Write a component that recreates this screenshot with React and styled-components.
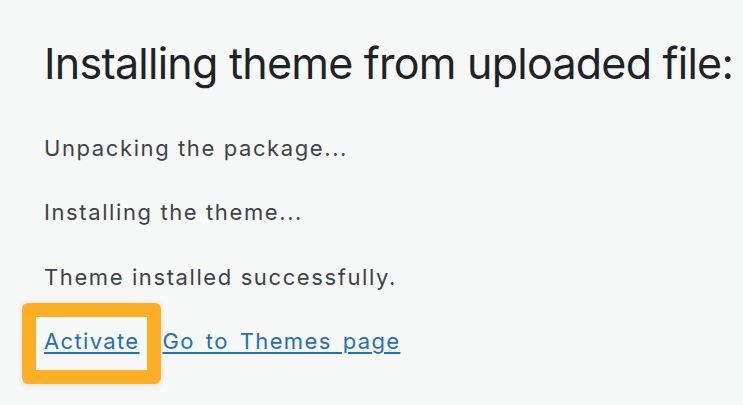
import * as React from 'react';
import styled, { createGlobalStyle } from 'styled-components';

const GlobalStyle = createGlobalStyle`
  html, body {
    margin: 0;
    padding: 0;
    background: #f6f7f7;
  }
  body {
    font-family: Inter, "Noto Sans", "Liberation Sans", sans-serif;
  }
`;

const Wrap = styled.div`
  box-sizing: border-box;
  width: 743px;
  height: 405px;
  overflow: hidden;
  padding: 37px 0 0 44px;
  background: #f6f7f7;
`;

const Title = styled.h1`
  margin: 0;
  font-size: 43px;
  line-height: 52px;
  font-weight: 400;
  color: #1d2327;
  white-space: nowrap;
  letter-spacing: -0.75px;
`;

const Steps = styled.div`
  display: flex;
  flex-direction: column;
  gap: 34px;
  margin-top: 44px;
`;

const Step = styled.p`
  margin: 0;
  font-size: 22px;
  line-height: 30px;
  letter-spacing: 1.6px;
  color: #3c434a;

  &:last-child {
    margin-top: 1px;
  }
`;

const Actions = styled.div`
  display: flex;
  align-items: baseline;
  gap: 23px;
  margin-top: 34px;
`;

const Link = styled.a`
  position: relative;
  font-size: 22px;
  line-height: 30px;
  letter-spacing: 1.35px;
  word-spacing: 3.5px;
  color: #2271b1;
  text-decoration: underline;
  text-underline-offset: 3px;
  text-decoration-thickness: 1.5px;

  ${props =>
    props.highlighted &&
    `
    &::before {
      content: '';
      position: absolute;
      left: -22px;
      right: -21px;
      top: -23px;
      bottom: -28px;
      border: 14px solid #fcae24;
      border-radius: 6px;
      box-shadow: 0 1px 6px rgba(0, 0, 0, 0.12);
      pointer-events: none;
    }
  `}
`;

export default function App() {
  return (
    <Wrap>
      <GlobalStyle />
      <Title>Installing theme from uploaded file:</Title>
      <Steps>
        <Step>Unpacking the package...</Step>
        <Step>Installing the theme...</Step>
        <Step>Theme installed successfully.</Step>
      </Steps>
      <Actions>
        <Link href="#" highlighted>
          Activate
        </Link>
        <Link href="#">Go to Themes page</Link>
      </Actions>
    </Wrap>
  );
}
